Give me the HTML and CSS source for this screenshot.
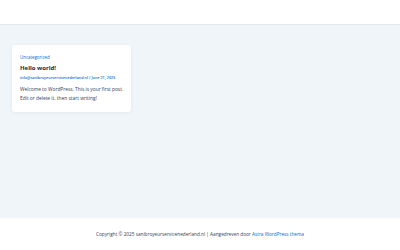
FILE: index.html
```html
<!DOCTYPE html>
<html lang="nl">

<head>
  <meta charset="UTF-8">
  <meta name="viewport" content="width=device-width, initial-scale=1.0">
  <title>sanibroyeurservicenederland.nl</title>
  <link rel="stylesheet" href="styles.css">
</head>

<body>
  <div class="page">
    <header class="site-header"></header>
    <main class="site-content">
      <article class="post-card">
        <a class="cat" href="#">Uncategorized</a>
        <h2 class="post-title">Hello world!</h2>
        <div class="post-meta"><a href="#">info@sanibroyeurservicenederland.nl</a> / June 21, 2025</div>
        <p class="excerpt">Welcome to WordPress. This is your first post. Edit or delete it, then start writing!</p>
      </article>
    </main>
    <footer class="site-footer">
      <p>Copyright © 2025 sanibroyeurservicenederland.nl | Aangedreven door <a href="#">Astra WordPress thema</a></p>
    </footer>
  </div>
</body>

</html>
```

FILE: styles.css
```css
* {
  margin: 0;
  padding: 0;
  box-sizing: border-box;
}

body {
  font-family: "Open Sans", "Noto Sans", sans-serif;
  color: #334155;
  background: #fff;
}

a {
  text-decoration: none;
  color: #046bd2;
}

.page {
  width: 400px;
  height: 250px;
  display: flex;
  flex-direction: column;
}

.site-header {
  height: 25px;
  background: #fff;
  border-bottom: 1px solid #e3e8ee;
}

.site-content {
  flex: 1;
  background: #f0f5fa;
  padding: 20px 12px;
}

.post-card {
  width: 119px;
  background: #fff;
  border-radius: 3px;
  box-shadow: 0 1px 4px rgba(0, 0, 0, 0.06);
  padding: 9px 5px 9px 8px;
}

.cat {
  display: block;
  font-size: 4.4px;
  line-height: 7px;
}

.post-title {
  font-size: 6px;
  font-weight: 700;
  color: #1e293b;
  line-height: 9px;
  margin-top: 3px;
}

.post-meta {
  font-size: 3.75px;
  font-weight: 600;
  color: #046bd2;
  line-height: 6px;
  margin-top: 2px;
  white-space: nowrap;
}

.excerpt {
  font-size: 4.85px;
  line-height: 9px;
  margin-top: 4px;
}

.site-footer {
  height: 32px;
  background: #fff;
  display: flex;
  align-items: center;
  justify-content: center;
  font-size: 4.72px;
}
```
